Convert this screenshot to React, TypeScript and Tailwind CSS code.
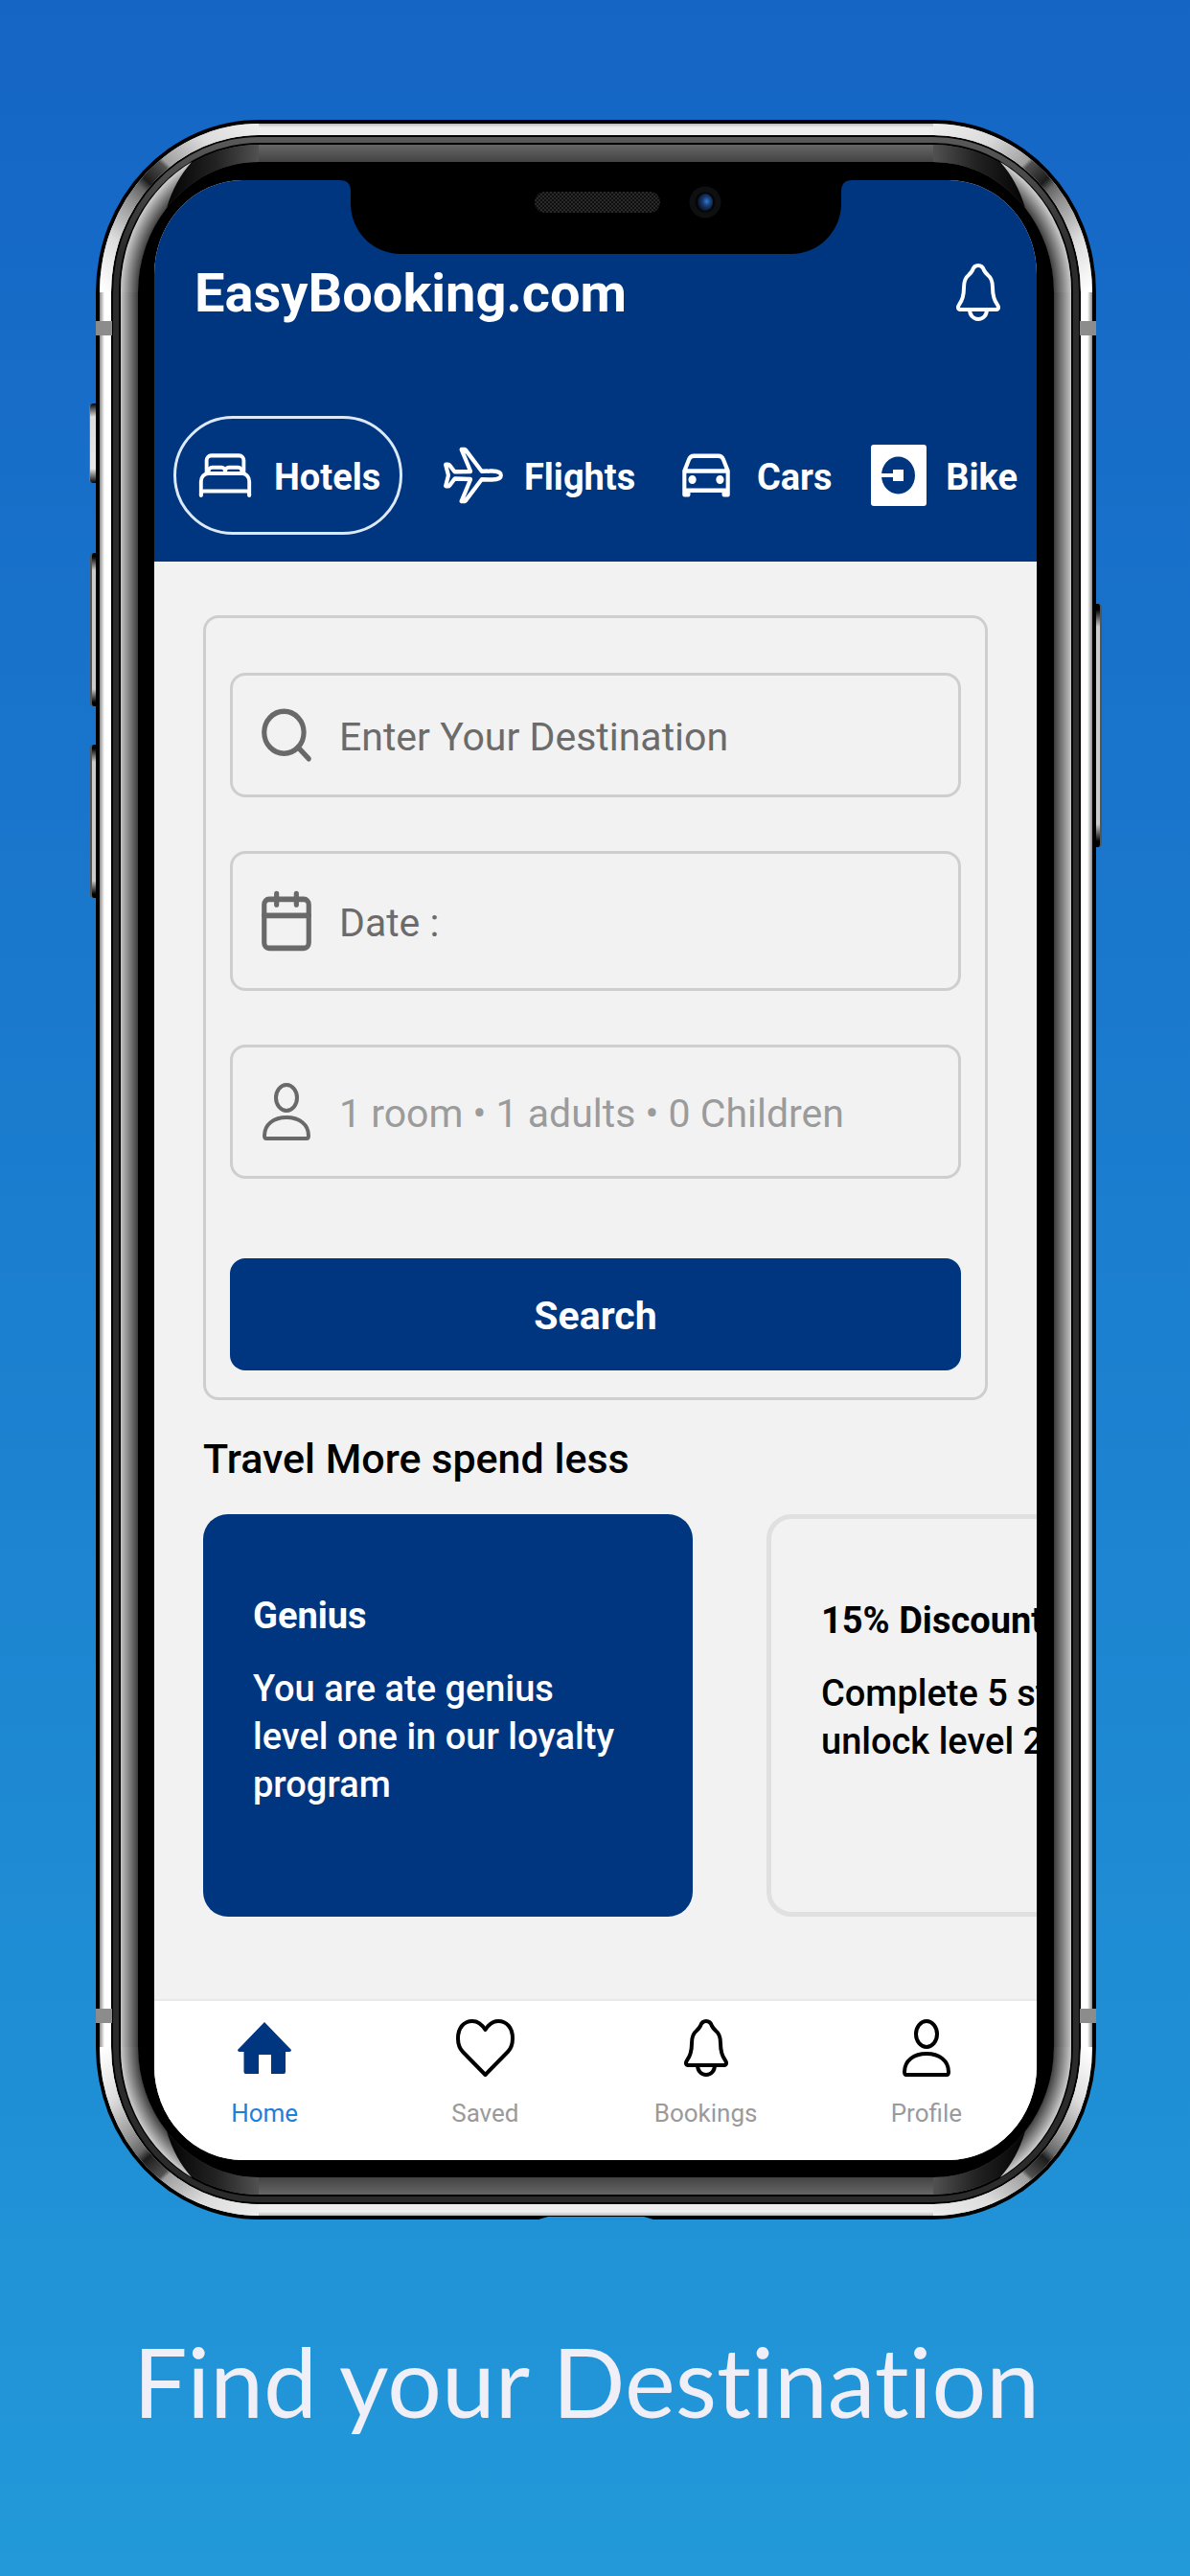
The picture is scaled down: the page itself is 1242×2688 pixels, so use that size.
import React from "react";
import { IoAirplaneOutline, IoBedOutline, IoCarOutline } from "react-icons/io5";
import { FiCalendar, FiSearch } from "react-icons/fi";

function BellIcon() {
  return (
    <svg className="h-[60px] w-[46px]" viewBox="0 0 46 60" fill="none" stroke="currentColor" strokeWidth="4" strokeLinejoin="round" aria-hidden="true">
      <path d="M23 2C20 2 18 4 17 7C16 9 15 10 13 12C9 15 8 19 8 25C8 34 6 39 3 43C1 46 2 48 5 48H41C44 48 45 46 43 43C40 39 38 34 38 25C38 19 37 15 33 12C31 10 30 9 29 7C28 4 26 2 23 2Z" />
      <path d="M14 48C14 54 18 58 23 58S32 54 32 48" />
    </svg>
  );
}

function PersonIcon() {
  return (
    <svg className="h-[60px] w-[50px]" viewBox="0 0 50 60" fill="none" stroke="currentColor" strokeWidth="4" strokeLinejoin="round" aria-hidden="true">
      <ellipse cx="25" cy="15.500" rx="11" ry="13.500" />
      <path d="M2 55C2 43 12 36 25 36S48 43 48 55Q48 58 46 58H4Q2 58 2 55Z" />
    </svg>
  );
}

function HeartIcon() {
  return (
    <svg className="h-[60px] w-[61px]" viewBox="0 0 61 60" fill="none" stroke="currentColor" strokeWidth="4" strokeLinejoin="round" aria-hidden="true">
      <path d="M30.500 11C26 4 21 2 17 2C8 2 2 9 2 20C2 26 4 31 7 34L30.500 58L54 34C57 31 59 26 59 20C59 9 53 2 44 2C40 2 35 4 30.500 11Z" />
    </svg>
  );
}

function HomeIcon() {
  return (
    <svg className="h-[54px] w-[56px] text-[#003580]" viewBox="0 0 56 54" fill="currentColor" aria-hidden="true">
      <path d="M28 0L56 29Q56 31 54 31H50V52Q50 54 48 54H35V34H22V54H8.500Q6.500 54 6.500 52V31H2Q0 31 0 29Z" />
    </svg>
  );
}

function BikeIcon() {
  return (
    <svg className="h-16 w-[58px]" viewBox="0 0 58 64" aria-hidden="true">
      <rect width="58" height="64" rx="3" fill="#fff" />
      <ellipse cx="28.500" cy="32" rx="17.500" ry="19.500" fill="#003580" />
      <path d="M10 30H23V26H34V38H23V34H10Z" fill="#fff" />
    </svg>
  );
}

const categories = [
  { label: "Hotels", icon: <IoBedOutline className="h-[66px] w-[62px]" preserveAspectRatio="none" aria-hidden="true" /> },
  { label: "Flights", icon: <IoAirplaneOutline className="h-[72px] w-[66px]" preserveAspectRatio="none" aria-hidden="true" /> },
  { label: "Cars", icon: <IoCarOutline className="h-[72px] w-[66px]" preserveAspectRatio="none" aria-hidden="true" /> },
  { label: "Bike", icon: <BikeIcon /> },
];

const navItems = [
  { label: "Home", icon: <HomeIcon /> },
  { label: "Saved", icon: <HeartIcon /> },
  { label: "Bookings", icon: <BellIcon /> },
  { label: "Profile", icon: <PersonIcon /> },
];

/* Polished metal corner of the handset; drawn for the top left and mirrored for the rest. */
function CornerShine({ id, className }: { id: string; className: string }) {
  return (
    <svg className={`pointer-events-none absolute h-[180px] w-[170px] ${className}`} viewBox="0 0 170 180" fill="none" aria-hidden="true">
      <defs>
        <linearGradient id={`${id}-steel`} gradientUnits="userSpaceOnUse" x1="10" y1="180" x2="170" y2="10">
          <stop offset="0" stopColor="#fff" />
          <stop offset="0.2" stopColor="#dcdcdc" />
          <stop offset="0.38" stopColor="#909090" />
          <stop offset="0.45" stopColor="#666" />
          <stop offset="0.49" stopColor="#1c1c1c" />
          <stop offset="0.59" stopColor="#505050" />
          <stop offset="0.61" stopColor="#a0a0a0" />
          <stop offset="0.8" stopColor="#dcdcdc" />
          <stop offset="1" stopColor="#ececec" />
        </linearGradient>
        <radialGradient id={`${id}-edge`} gradientUnits="userSpaceOnUse" cx="0" cy="0" r="1" gradientTransform="translate(170 180) scale(144 154)">
          <stop offset="0.87" stopColor="#3c3c3c" />
          <stop offset="1" stopColor="#c8c8c8" />
        </radialGradient>
        <linearGradient id={`${id}-dark`} gradientUnits="userSpaceOnUse" x1="80" y1="0" x2="170" y2="0">
          <stop offset="0" stopColor="#060606" />
          <stop offset="0.5" stopColor="#222" />
          <stop offset="1" stopColor="#515151" />
        </linearGradient>
      </defs>
      <path d="M10 180A160 170 0 0 1 170 10" stroke={`url(#${id}-steel)`} strokeWidth="12" />
      <path d="M26 180A144 154 0 0 1 170 26V44A126 136 0 0 0 44 180Z" fill={`url(#${id}-dark)`} />
      <path d="M26 180A144 154 0 0 1 100 44C88 58 80 72 74 92A126 136 0 0 0 44 180Z" fill={`url(#${id}-edge)`} />
    </svg>
  );
}

function Field({ icon, placeholder, className, inputClassName }: { icon: React.ReactNode; placeholder: string; className: string; inputClassName: string }) {
  return (
    <label className={`flex items-center gap-6 rounded-2xl border-[3px] border-[#cecece] pl-[25px] pr-6 text-[#696969] ${className}`}>
      <span className="flex w-[62px] shrink-0 justify-center">{icon}</span>
      <input aria-label={placeholder} placeholder={placeholder} className={`w-full min-w-0 bg-transparent pt-1 text-[41px] leading-[48px] outline-none ${inputClassName}`} />
    </label>
  );
}

function Screen() {
  return (
    <div className="overflow-hidden rounded-[92px/98px] bg-[#f2f2f2] font-[Roboto,sans-serif]">
      <header className="bg-[#003580] pb-7 pt-[84px] text-white">
        <div className="flex items-center justify-between pl-[42px] pr-[38px]">
          <h1 className="pt-0.5 text-[56px] font-bold leading-[64px]">EasyBooking.com</h1>
          <button type="button" aria-label="Notifications">
            <BellIcon />
          </button>
        </div>
        <div className="mt-8 flex items-center justify-between px-5 pt-16">
          {categories.map(({ label, icon }, i) => (
            <button
              key={label}
              type="button"
              aria-pressed={i === 0}
              className={
                i === 0
                  ? "flex h-[124px] items-center gap-5 rounded-full border-[3px] border-[#dce9f7] px-5 text-[38px] font-bold"
                  : "flex items-center gap-5 text-[38px] font-bold"
              }
            >
              {icon}
              <span className="pt-1">{label}</span>
            </button>
          ))}
        </div>
      </header>

      <main className="pb-[86px]">
        <form className="mx-[51px] mt-14 flex flex-col rounded-2xl border-[3px] border-[#cecece] px-[25px] pb-7 pt-[57px]" onSubmit={(e) => e.preventDefault()}>
          <Field
            className="h-[130px]"
            inputClassName="placeholder:text-[#6b6b6b]"
            placeholder="Enter Your Destination"
            icon={<FiSearch className="h-[66px] w-[62px]" preserveAspectRatio="none" aria-hidden="true" />}
          />
          <Field
            className="mt-14 h-[146px]"
            inputClassName="placeholder:text-[#6b6b6b]"
            placeholder="Date :"
            icon={<FiCalendar className="h-[68px] w-[62px]" preserveAspectRatio="none" aria-hidden="true" />}
          />
          <Field
            className="mt-14 h-[140px]"
            inputClassName="placeholder:text-[#9b9b9b]"
            placeholder="1 room • 1 adults • 0 Children"
            icon={<PersonIcon />}
          />
          <button type="submit" className="mt-[83px] h-[117px] rounded-2xl bg-[#003580] pt-1 text-[41px] font-bold text-white">
            Search
          </button>
        </form>

        <h2 className="ml-[51px] mt-[35px] text-[43px] font-medium leading-[52px] text-black">Travel More spend less</h2>

        <div className="mt-8 flex gap-[77px] overflow-hidden pl-[51px] text-[38px] leading-[50px]">
          <article className="h-[420px] w-[511px] shrink-0 rounded-[26px] bg-[#003580] pl-[52px] pr-16 pt-[81px] text-white">
            <h3 className="font-bold">Genius</h3>
            <p className="mt-[26px] font-medium">You are ate genius level one in our loyalty program</p>
          </article>
          <article className="h-[420px] w-[511px] shrink-0 rounded-[26px] border-[5px] border-[#e0e0e0] pl-[52px] pt-[81px] text-black">
            <h3 className="font-bold">15% Discount</h3>
            <p className="mt-[26px] font-medium">
              Complete 5 stays to
              <br />
              unlock level 2
            </p>
          </article>
        </div>
      </main>

      <nav className="flex border-t-2 border-[#e9e9e9] bg-white pb-[33px] pt-[19px] text-[26px] leading-8">
        {navItems.map(({ label, icon }, i) => (
          <a key={label} href={`#${label.toLowerCase()}`} aria-current={i === 0 ? "page" : undefined} className="flex flex-1 flex-col items-center gap-[22px] text-black">
            <span className="flex h-[60px] items-center">{icon}</span>
            <span className={i === 0 ? "text-[#1e7fdb]" : "text-[#9a9a9a]"}>{label}</span>
          </a>
        ))}
      </nav>
    </div>
  );
}

function Notch() {
  return (
    <svg className="absolute left-1/2 top-[61px] h-[80px] w-[540px] -translate-x-1/2" viewBox="0 0 540 80" aria-hidden="true">
      <defs>
        <pattern id="mesh" width="4" height="4" patternUnits="userSpaceOnUse">
          <rect width="4" height="4" fill="#0e0e0e" />
          <rect width="2" height="2" fill="#2a2a2a" />
          <rect x="2" y="2" width="2" height="2" fill="#2a2a2a" />
        </pattern>
        <radialGradient id="lens" cx="0.6" cy="0.45" r="0.6">
          <stop offset="0" stopColor="#2f7ad0" />
          <stop offset="0.45" stopColor="#173a70" />
          <stop offset="1" stopColor="#0a1224" />
        </radialGradient>
      </defs>
      <path d="M0 0H540V2H537Q526 2 526 14V26C526 56 502 79 474 79H66C38 79 14 56 14 26V14Q14 2 3 2H0Z" fill="#000" />
      <rect x="206" y="14" width="131" height="22" rx="11" fill="url(#mesh)" />
      <circle cx="384" cy="25" r="16.500" fill="#0e0f11" />
      <circle cx="384" cy="25" r="10.500" fill="#050505" />
      <ellipse cx="384" cy="25" rx="8" ry="9" fill="url(#lens)" />
    </svg>
  );
}

function Phone() {
  return (
    <div className="relative ml-[100px] mr-[98px]">
      <span className="absolute -left-[7px] top-[296px] h-[83px] w-3 rounded-l-[4px] border-l border-[#777] bg-[linear-gradient(180deg,#000,#ddd_14px,#e8e8e8_68px,#000)]" />
      <span className="absolute -left-[6px] top-[452px] h-40 w-3 rounded-l-[4px] border-l-2 border-[#555] bg-[linear-gradient(180deg,#000_4px,#ccc_18px,#ccc_142px,#000_156px)]" />
      <span className="absolute -left-[6px] top-[652px] h-40 w-3 rounded-l-[4px] border-l-2 border-[#555] bg-[linear-gradient(180deg,#000_4px,#ccc_18px,#ccc_142px,#000_156px)]" />
      <span className="absolute -right-[6px] top-[505px] h-[254px] w-3 rounded-r-[4px] border-r-2 border-[#555] bg-[linear-gradient(180deg,#000_6px,#ccc_24px,#ccc_230px,#000_248px)]" />

      <div className="relative rounded-[170px/180px] bg-black p-1">
        <div className="rounded-[166px/176px] bg-[linear-gradient(90deg,#8a8a8a,#fff_5px,#fff_12px,transparent_12px,transparent_calc(100%_-_12px),#fff_calc(100%_-_12px),#fff_calc(100%_-_5px),#8a8a8a),linear-gradient(180deg,#bbb,#eee_4px,#eee_calc(100%_-_4px),#bbb)] p-3">
          <div className="rounded-[154px/164px] bg-black p-0.5">
            <div className="rounded-[152px/162px] bg-[linear-gradient(180deg,#5a5a5a,#2b2b2b_120px)] p-1.5">
              <div className="rounded-[146px/156px] bg-black p-0.5">
                <div className="rounded-[144px/154px] bg-[linear-gradient(90deg,#c4c4c4,#3c3c3c_18px,transparent_18px,transparent_calc(100%_-_18px),#3c3c3c_calc(100%_-_18px),#c4c4c4),linear-gradient(180deg,#666,#434343_18px,#434343_calc(100%_-_18px),#666)] p-[18px]">
                  <div className="rounded-[126px/136px] bg-black pb-[18px] pl-[17px] pr-[18px] pt-[19px]">
                    <Screen />
                  </div>
                </div>
              </div>
            </div>
          </div>
        </div>
        <CornerShine id="tl" className="left-0 top-0" />
        <CornerShine id="tr" className="right-0 top-0 -scale-x-100" />
        <CornerShine id="bl" className="bottom-0 left-0 -scale-y-100" />
        <CornerShine id="br" className="bottom-0 right-0 -scale-100" />
        <span className="absolute left-0 top-[210px] h-[15px] w-[17px] bg-[#8c8c8c]" />
        <span className="absolute right-0 top-[210px] h-[15px] w-[17px] bg-[#8c8c8c]" />
        <span className="absolute bottom-[205px] left-0 h-[15px] w-[17px] bg-[#8c8c8c]" />
        <span className="absolute bottom-[205px] right-0 h-[15px] w-[17px] bg-[#8c8c8c]" />
        <svg className="absolute bottom-0 left-1/2 h-[3px] w-[120px] -translate-x-1/2" viewBox="0 0 120 3" aria-hidden="true">
          <path d="M0 3L10 0H110L120 3Z" fill="#2090d5" />
        </svg>
        <Notch />
      </div>
    </div>
  );
}

export default function App() {
  return (
    <div className="min-h-screen bg-[linear-gradient(180deg,#1565c5,#2299d9)] pb-[130px] pt-[125px]">
      <Phone />
      <p className="mt-[108px] pr-[18px] text-center font-[Lato,sans-serif] text-[100px] leading-[120px] text-[#f0eef6] [font-variant-ligatures:none]">Find your Destination</p>
    </div>
  );
}
